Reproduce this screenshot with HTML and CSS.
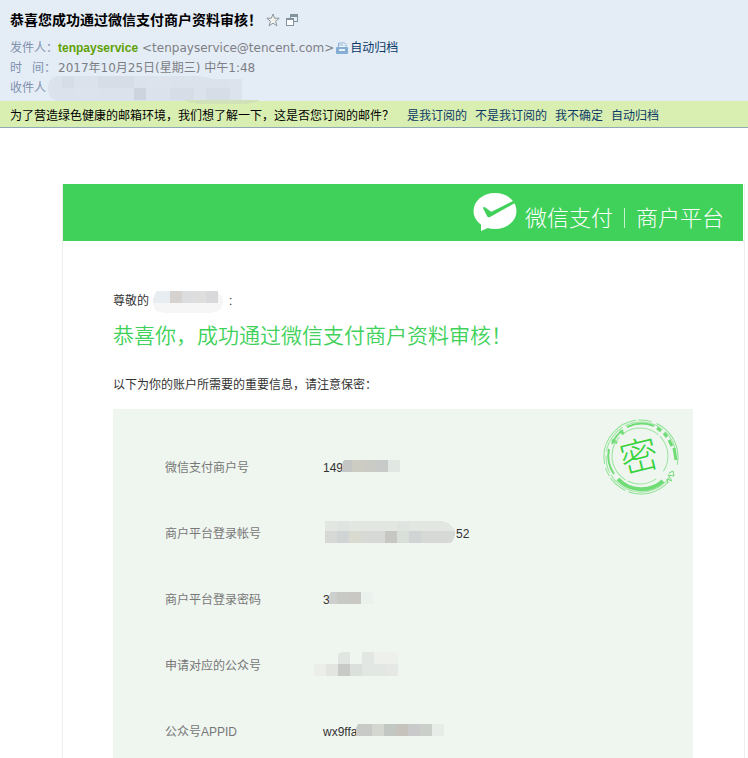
FILE: index.html
```html
<!DOCTYPE html>
<html lang="zh-CN">
<head>
    <meta charset="UTF-8">
    <meta name="viewport" content="width=device-width, initial-scale=1.0">
    <title>恭喜您成功通过微信支付商户资料审核！</title>
    <link rel="stylesheet" href="styles.css">
</head>
<body>
    <header class="mail-header">
        <div class="subject">
            <h1>恭喜您成功通过微信支付商户资料审核！</h1>
            <button class="icon-btn" type="button" aria-label="星标">
                <svg width="14" height="14" viewBox="0 0 14 14"><path d="M7 1l1.6 4.2 4.6.1-3.6 2.9 1.3 4.6L7 10.2l-3.9 2.6 1.3-4.6L.8 5.3l4.6-.1z" fill="#f1f1ee" stroke="#8b989e"/></svg>
            </button>
            <button class="icon-btn" type="button" aria-label="新窗口打开">
                <svg width="12" height="12" viewBox="0 0 12 12" shape-rendering="crispEdges"><path d="M4 0h8v8H8V7h3V3H5v1H4z" fill="#82939d"/><path d="M0 4h8v8H0z" fill="#82939d"/><path d="M1 6h6v5H1z" fill="#fff"/></svg>
            </button>
        </div>
        <div class="meta">
            <span class="meta-label">发件人：</span>
            <b class="sender">tenpayservice</b>
            <span class="address">&lt;tenpayservice@tencent.com&gt;</span>
            <a class="archive" href="#">
                <svg width="12" height="12" viewBox="0 0 12 12"><path d="M2.5 5V1h6l1.500 1.500V5" fill="#f4f8fc" stroke="#8fb3d6"/><path d="M4 2v2M6 2v2M8 3v1" stroke="#8fb3d6"/><rect y="5" width="12" height="7" rx="1" fill="#86add3"/><rect x="3" y="7" width="6" height="2" fill="#e6f0f9"/></svg>自动归档</a>
        </div>
        <div class="meta">
            <span class="meta-label">时&nbsp;&nbsp; 间：</span>
            <span class="date">2017年10月25日(星期三) 中午1:48</span>
        </div>
        <div class="meta">
            <span class="meta-label">收件人</span>
            <svg class="mask-receiver" width="212" height="28" viewBox="0 0 212 28" shape-rendering="crispEdges">
                <path d="M12 0h132q12 0 20 3h30v22H12Q0 24 0 12T12 0z" fill="#dbe2eb"/>
                <path d="M14 0h12v12H14zM50 0h36v12H50zM122 12h24v12h-24zM158 12h24v12h-24z" fill="#d7dde6"/>
                <path d="M26 12h24v12H26zM98 0h24v12H98zM182 3h12v21h-12z" fill="#dde3ec"/>
                <path d="M86 12h12v12H86z" fill="#ced4de"/>
                <path d="M136 24h76q-6 4-22 4h-34q-14 0-20-4z" fill="#d2e2b8"/>
            </svg>
        </div>
    </header>

    <div class="survey">
        <span class="question">为了营造绿色健康的邮箱环境，我们想了解一下，这是否您订阅的邮件？</span>
        <a href="#">是我订阅的</a>
        <a href="#">不是我订阅的</a>
        <a href="#">我不确定</a>
        <a href="#">自动归档</a>
    </div>

    <main class="letter">
        <div class="banner">
            <svg class="logo" width="44" height="39" viewBox="0 0 44 39">
                <ellipse cx="22" cy="18" rx="21.500" ry="18" fill="#fff"/>
                <path d="M8 29v9l9-4z" fill="#fff"/>
                <path d="M10 15q1-2 3 0l4 3q1 1 3 0L40 8l2 2-25 14q-2 1-3-1z" fill="#40d15a"/>
            </svg>
            <span class="brand">微信支付</span>
            <span class="divider"></span>
            <span class="brand">商户平台</span>
        </div>

        <div class="content">
            <p class="dear">尊敬的
                <svg width="72" height="22" viewBox="0 0 72 22" shape-rendering="crispEdges">
                    <path d="M12 0h42q16 0 16 11T54 22H14Q0 22 0 12T12 0z" fill="#f6f6f6"/>
                    <path d="M5 0h12v12H0q0-9 5-12z" fill="#e8edf1"/>
                    <path d="M17 0h12v12H17z" fill="#d5d2d0"/>
                    <path d="M29 0h12v12H29z" fill="#dcdddf"/>
                    <path d="M41 0h12v12H41z" fill="#dededd"/>
                    <path d="M53 0h12v12H53z" fill="#d9d9dc"/>
                </svg>:</p>
            <h2>恭喜你，成功通过微信支付商户资料审核！</h2>
            <p class="intro">以下为你的账户所需要的重要信息，请注意保密：</p>

            <div class="panel">
                <svg class="stamp" width="76" height="76" viewBox="0 0 76 76">
                    <g fill="none" stroke="#6fdc76">
                        <circle cx="38" cy="38" r="37" stroke="#8be391" stroke-dasharray="44 3 20 2 9 4 60 2 14 5 50 20" transform="rotate(42 38 38)"/>
                        <circle cx="38" cy="38" r="35" stroke="#9be5a0" stroke-dasharray="70 2 18 4 30 3 40 3 20 30" transform="rotate(35 38 38)"/>
                        <path d="M60 62A32 32 0 0 1 15 60" stroke-width="4"/>
                        <path d="M11 55A32 32 0 0 1 6 30M9 25A32 32 0 0 1 20 11M24 8A33 33 0 0 1 51 7" stroke-width="2"/>
                        <path d="M54 9l4 3M61 14l3 4M66 21l3 6M71 29l2 12M9 21l5 3M17 12l4 3" stroke-width="3"/>
                        <path d="M66 54l4-2 1 5-6-1 4 6-5-2 1 4" stroke-width="1"/>
                        <circle cx="37" cy="37" r="28" stroke="#9be5a0" stroke-dasharray="30 2 50 3 40 2 38 11" transform="rotate(55 37 37)"/>
                    </g>
                    <text class="stamp-text" x="36" y="51" text-anchor="middle" transform="rotate(-14 36 37)">密</text>
                </svg>
                <table>
                    <tr>
                        <th scope="row">微信支付商户号</th>
                        <td><span class="value">149<svg width="58" height="12" viewBox="0 0 58 12" shape-rendering="crispEdges"><path d="M2 0h8v12H0V4z" fill="#c3c6c5"/><path d="M10 0h12v12H10z" fill="#cdccc3"/><path d="M22 0h12v12H22z" fill="#cacbc5"/><path d="M34 0h12v12H34z" fill="#c8cac9"/><path d="M46 0h12v12H46z" fill="#e1e7e3"/></svg></span></td>
                    </tr>
                    <tr>
                        <th scope="row">商户平台登录帐号</th>
                        <td><span class="value"><svg width="134" height="22" viewBox="0 0 134 22" shape-rendering="crispEdges"><path d="M3 0h117q10 2 13 10H3z" fill="#e3e7e2"/><path d="M15 0h12v10H15zM75 1h12v9H75z" fill="#dfe4e1"/><path d="M3 10h130q0 8-4 12H3z" fill="#d6d9d5"/><path d="M15 10h12v12H15zM87 10h12v12H87z" fill="#d1d4d4"/><path d="M27 10h12v12H27z" fill="#dadbd0"/><path d="M63 10h12v12H63z" fill="#c6c7c2"/><path d="M75 10h12v12H75z" fill="#d9dfd9"/></svg>52</span></td>
                    </tr>
                    <tr>
                        <th scope="row">商户平台登录密码</th>
                        <td><span class="value">3<svg width="44" height="12" viewBox="0 0 44 12" shape-rendering="crispEdges"><path d="M2 0h6v12H0V4z" fill="#cdcfcc"/><path d="M8 0h12v12H8z" fill="#c8cac5"/><path d="M20 0h12v12H20z" fill="#c9c8c3"/><path d="M32 0h12v12H32z" fill="#ebf2ee"/></svg></span></td>
                    </tr>
                    <tr>
                        <th scope="row">申请对应的公众号</th>
                        <td><span class="value wide"><svg width="84" height="24" viewBox="0 0 84 24" shape-rendering="crispEdges"><path d="M24 2l4-2h8v12H24z" fill="#e1e5e1"/><path d="M48 0h12v12H48z" fill="#e2e7e4"/><path d="M60 0h20l4 3v9H60z" fill="#edf0eb"/><path d="M0 12h12v12H0z" fill="#eceeea"/><path d="M12 12h12v12H12z" fill="#e3e5e1"/><path d="M24 12h12v12H24z" fill="#c8cac7"/><path d="M36 12h12v12H36z" fill="#dce0dc"/><path d="M48 12h24v12H48z" fill="#e2e7e4"/><path d="M72 12h12v10l-2 2H72z" fill="#e6e8e6"/></svg></span></td>
                    </tr>
                    <tr>
                        <th scope="row">公众号APPID</th>
                        <td><span class="value">wx9ffa<svg width="88" height="12" viewBox="0 0 88 12" shape-rendering="crispEdges"><path d="M2 0h14v12H0V4z" fill="#c7cac6"/><path d="M16 0h12v12H16z" fill="#d4d6d0"/><path d="M28 0h12v12H28z" fill="#c2c7c4"/><path d="M40 0h12v12H40z" fill="#c5c3bc"/><path d="M52 0h12v12H52z" fill="#c9c8ca"/><path d="M64 0h12v12H64z" fill="#cbcfca"/><path d="M76 0h12v12H76z" fill="#e7ece9"/></svg></span></td>
                    </tr>
                </table>
            </div>
        </div>
    </main>
</body>
</html>
```
FILE: styles.css
```css
body {
    margin: 0;
    background: #fff;
    color: #333;
    font-family: "Liberation Sans", "Noto Sans CJK SC", sans-serif;
    font-size: 12px;
    line-height: 20px;
}

h1, h2, p {
    margin: 0;
}

a {
    color: #0b3a66;
    text-decoration: none;
}

a:hover {
    text-decoration: underline;
}

svg {
    flex: none;
}

/* mail header */
.mail-header {
    background: #e4ecf6;
    padding: 10px 10px 4px;
}

.subject {
    display: flex;
    align-items: center;
    gap: 6px;
    margin-bottom: 8px;
}

.subject h1 {
    color: #000;
    font-size: 14px;
    line-height: 20px;
}

.icon-btn {
    display: flex;
    padding: 0;
    border: none;
    background: none;
    cursor: pointer;
}

.icon-btn:first-of-type {
    margin-left: -2px;
}

.meta {
    display: flex;
    align-items: center;
    position: relative;
    height: 20px;
    color: #798699;
    white-space: nowrap;
}

.meta:last-child {
    height: 19px;
}

.meta-label {
    width: 48px;
    flex: none;
    color: #8091ae;
}

.sender {
    color: #5fa207;
    margin-right: 4px;
}

.address, .date {
    color: #7d7f84;
    font-family: "DejaVu Sans", "Noto Sans CJK SC", sans-serif;
}

.archive {
    display: flex;
    align-items: center;
    gap: 2px;
    margin-left: 2px;
}

.mask-receiver {
    position: absolute;
    left: 38px;
    top: -2px;
}

/* subscription question bar */
.survey {
    display: flex;
    flex-wrap: wrap;
    gap: 0 8px;
    padding: 5px 10px 1px;
    background: #d9efb2;
    border-bottom: 1px solid #8fa9b5;
}

.question {
    color: #000;
    margin-right: 5px;
}

/* letter */
.letter {
    margin: 56px 3px 0 62px;
    border: 1px solid #eee;
    border-top: none;
    padding-right: 1px;
}

.banner {
    display: flex;
    align-items: center;
    justify-content: flex-end;
    height: 57px;
    padding-right: 19px;
    background: #40d15a;
}

.brand {
    color: #fff;
    font-family: "Noto Sans CJK SC", sans-serif;
    font-size: 22px;
    font-weight: 300;
    line-height: 32px;
    padding-top: 6px;
}

.logo {
    margin-right: 8px;
}

.divider {
    width: 1px;
    height: 20px;
    margin: 10px 11px 0;
    background: #c5f2cd;
}

.content {
    padding: 48px 50px 0;
}

.dear {
    display: flex;
    align-items: center;
    gap: 4px;
    height: 24px;
}

.dear svg {
    margin-top: 2px;
}

h2 {
    margin: 7px 0 23px;
    color: #40d15a;
    font-size: 21px;
    font-weight: 350;
    line-height: 32px;
}

.intro {
    margin-bottom: 14px;
}

.panel {
    position: relative;
    padding: 26px 52px 0;
    background: #eff5ef;
}

.stamp {
    position: absolute;
    top: 10px;
    right: 14px;
}

.stamp-text {
    font-family: "Noto Sans CJK SC", sans-serif;
    font-size: 38px;
    font-weight: 300;
    fill: #35d23c;
}

table {
    border-collapse: collapse;
}

th, td {
    height: 66px;
    padding: 0;
    text-align: left;
}

th {
    width: 158px;
    color: #777;
    font-weight: normal;
}

.value {
    display: flex;
    align-items: center;
}

/* the masks cover the tail of the text and sit slightly above its middle */
.value svg {
    margin-left: -1px;
    margin-bottom: 4px;
}

.wide {
    margin-left: -8px;
}
```
